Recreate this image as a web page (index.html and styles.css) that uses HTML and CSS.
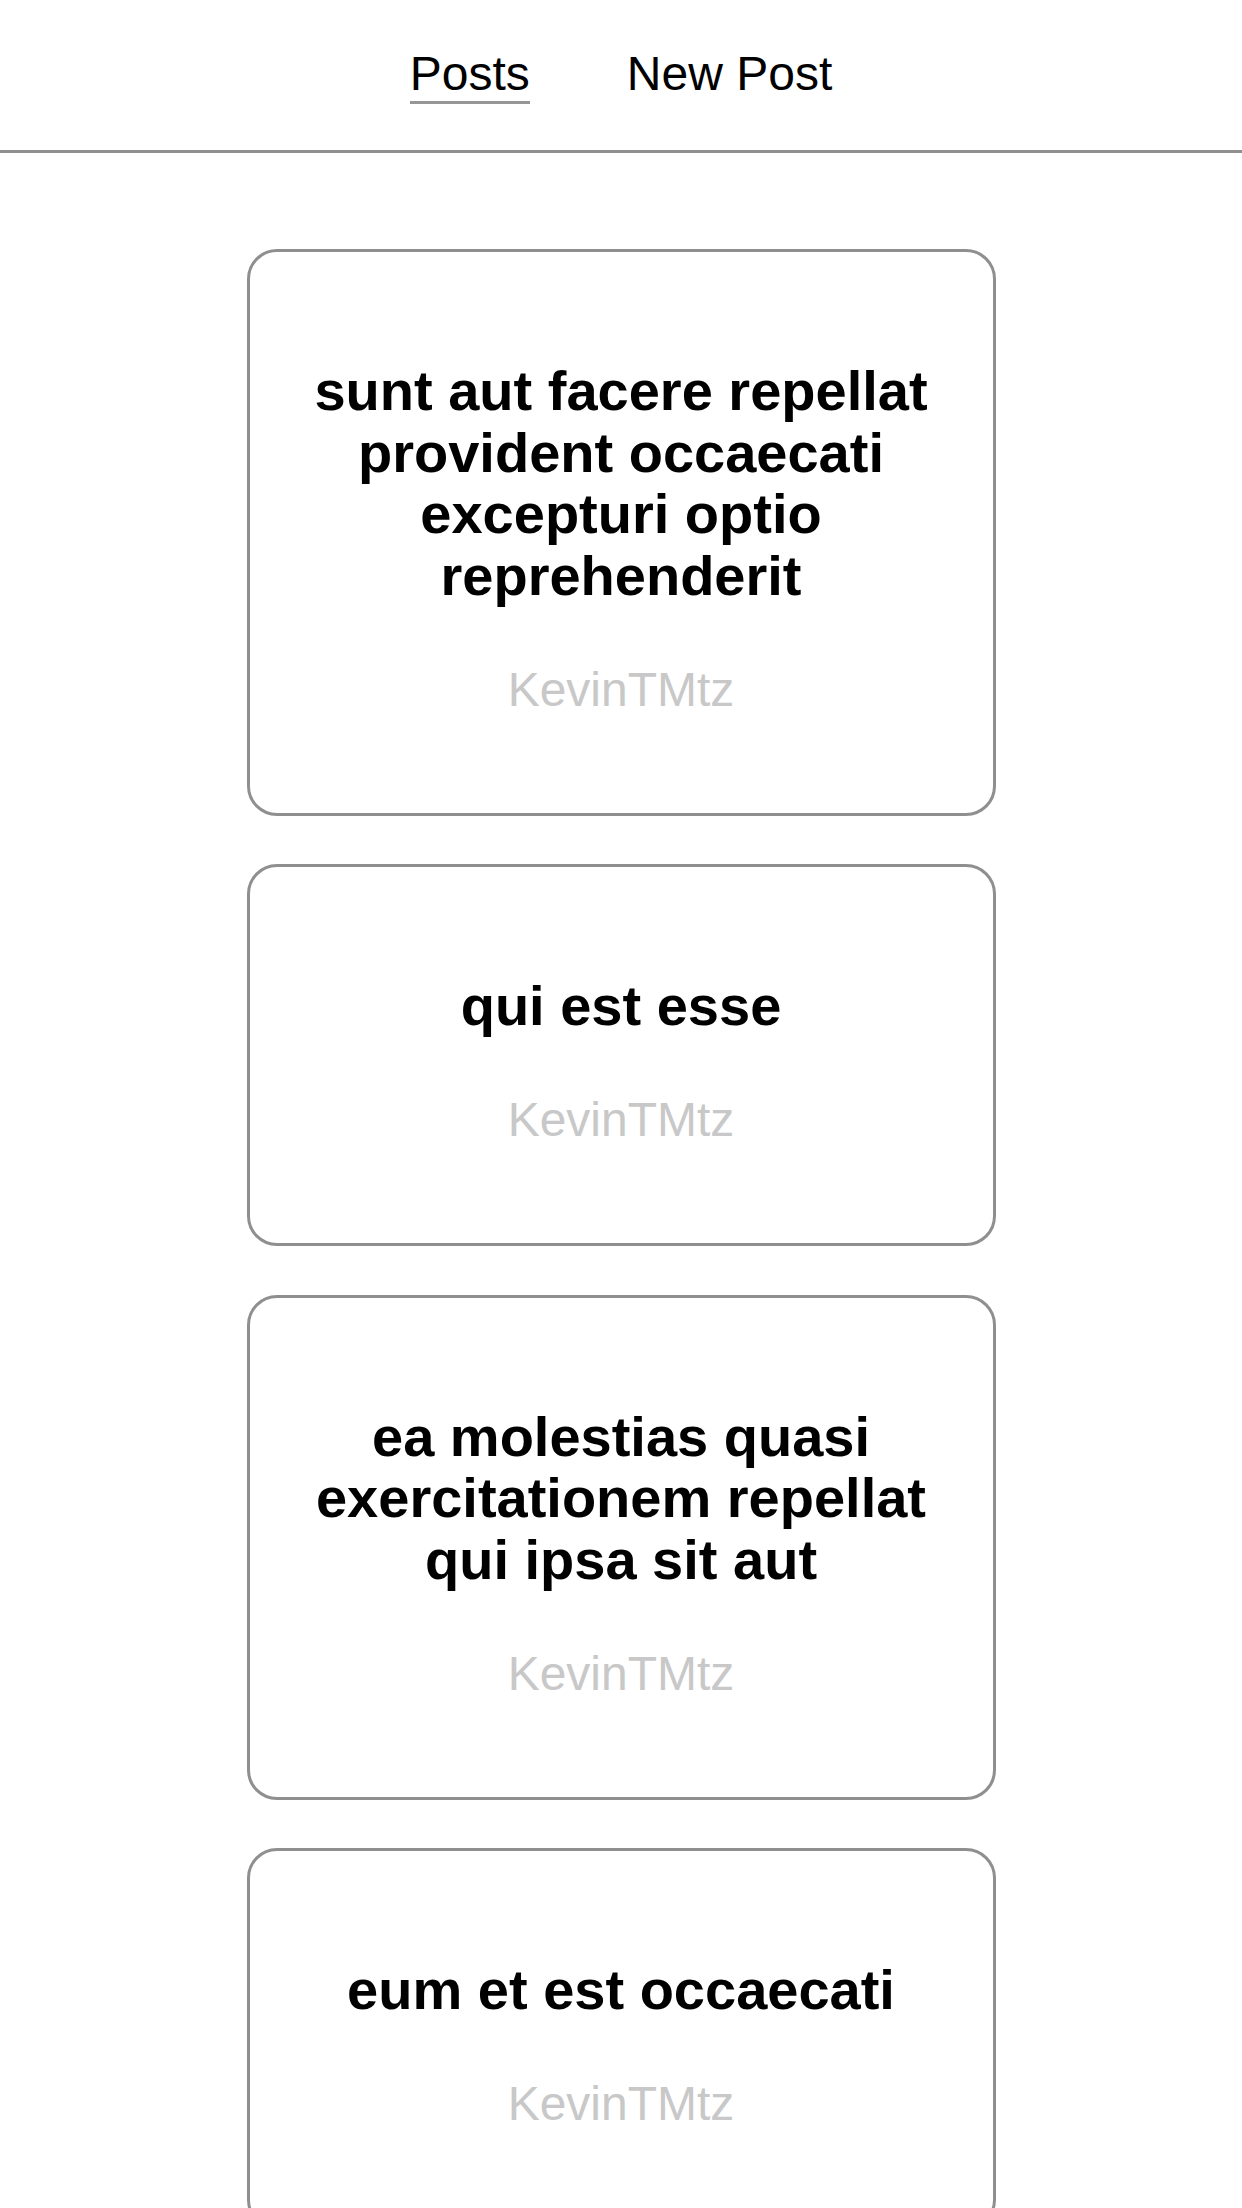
FILE: index.html
```html
<!DOCTYPE html>
<html lang="en">
<head>
<meta charset="utf-8">
<title>Posts</title>
<link rel="stylesheet" href="styles.css">
</head>
<body>
<header class="topbar">
  <nav class="nav">
    <a class="nav-link active" href="#">Posts</a>
    <a class="nav-link" href="#">New Post</a>
  </nav>
</header>
<main class="posts">
  <article class="card">
    <h3 class="card-title">sunt aut facere repellat provident occaecati excepturi optio reprehenderit</h3>
    <p class="card-author">KevinTMtz</p>
  </article>
  <article class="card">
    <h3 class="card-title">qui est esse</h3>
    <p class="card-author">KevinTMtz</p>
  </article>
  <article class="card">
    <h3 class="card-title">ea molestias quasi exercitationem repellat qui ipsa sit aut</h3>
    <p class="card-author">KevinTMtz</p>
  </article>
  <article class="card">
    <h3 class="card-title">eum et est occaecati</h3>
    <p class="card-author">KevinTMtz</p>
  </article>
</main>
</body>
</html>
```

FILE: styles.css
```css
html, body {
  margin: 0;
  padding: 0;
  background: #ffffff;
}

body {
  font-family: "Liberation Sans", Arial, Helvetica, sans-serif;
  color: #000000;
}

.topbar {
  padding: 46px 0;
  border-bottom: 3px solid #8f8f8f;
}

.nav {
  display: flex;
  justify-content: center;
  gap: 97px;
}

.nav-link {
  display: block;
  font-size: 48px;
  line-height: 55px;
  color: #000000;
  text-decoration: none;
  border-bottom: 3px solid transparent;
}

.nav-link.active {
  border-bottom-color: #969696;
}

.posts {
  display: flex;
  flex-direction: column;
  align-items: center;
  gap: 48.5px;
  padding: 96px 0 48px;
}

.card {
  width: 749px;
  box-sizing: border-box;
  border: 3px solid #8f8f8f;
  border-radius: 30px;
  padding: 48px;
  text-align: center;
}

.card-title {
  margin: 60px 0 55px;
  font-size: 56px;
  line-height: 61.7px;
  font-weight: 700;
}

.card-author {
  margin: 48px 0;
  font-size: 48px;
  line-height: 55px;
  color: #c8c8c8;
}
```
